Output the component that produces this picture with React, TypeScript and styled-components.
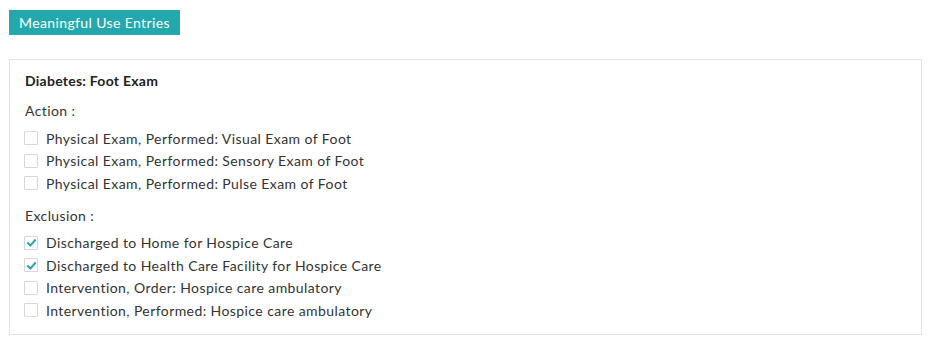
import styled, { createGlobalStyle } from "styled-components";

const GlobalStyle = createGlobalStyle`
  body {
    margin: 0;
    background: #fff;
    font-family: Lato, "Open Sans", sans-serif;
    color: #333;
  }
`

const Page = styled.div`
  padding: 10px 9px 0 9px;
`

const EntriesButton = styled.button`
  display: block;
  height: 25px;
  padding: 0 10px;
  border: none;
  border-radius: 0;
  background: #23a9ad;
  color: #fff;
  font-family: Lato, sans-serif;
  font-size: 14px;
  letter-spacing: 0.38px;
  line-height: 25px;
  cursor: pointer;
`

const Panel = styled.section`
  margin-top: 24px;
  border: 1px solid #e3e3e3;
  padding: 12px 15px 12px 15px;
`

const Title = styled.h3`
  margin: 0;
  font-size: 14px;
  font-weight: 700;
  letter-spacing: 0.25px;
  line-height: 18px;
  color: #222;
`

const GroupLabel = styled.div`
  margin-top: 12px;
  font-size: 14px;
  line-height: 18px;
  letter-spacing: 0.4px;
`

const List = styled.ul`
  list-style: none;
  margin: 7px 0 0 0;
  padding: 0;
`

const Row = styled.li`
  display: flex;
  align-items: center;
  height: 22.5px;
  font-size: 14px;
  letter-spacing: 0.42px;
`

const Box = styled.span`
  box-sizing: border-box;
  width: 14px;
  height: 14px;
  margin-left: -1px;
  margin-right: 8px;
  border: 1px solid #d6d6d6;
  border-radius: 1px;
  display: flex;
  align-items: center;
  justify-content: center;
  background: #fff;
  flex-shrink: 0;
`

interface IEntry {
  label: string,
  checked?: boolean,
}

const actions: IEntry[] = [
  { label: "Physical Exam, Performed: Visual Exam of Foot" },
  { label: "Physical Exam, Performed: Sensory Exam of Foot" },
  { label: "Physical Exam, Performed: Pulse Exam of Foot" },
]

const exclusions: IEntry[] = [
  { label: "Discharged to Home for Hospice Care", checked: true },
  { label: "Discharged to Health Care Facility for Hospice Care", checked: true },
  { label: "Intervention, Order: Hospice care ambulatory" },
  { label: "Intervention, Performed: Hospice care ambulatory" },
]

function Check({ checked }: { checked?: boolean }) {
  return <Box>
    {checked && (
      <svg width="11" height="11" viewBox="0 0 10 10">
        <path d="M1.2 5 L4 7.7 L8.8 2.3" fill="none" stroke="#23a9ad" strokeWidth="1.8" />
      </svg>
    )}
  </Box>
}

function EntryList({ items }: { items: IEntry[] }) {
  return <List>
    {items.map(item =>
      <Row key={item.label}>
        <Check checked={item.checked} />
        {item.label}
      </Row>)}
  </List>
}

export default function App() {
  return <>
    <GlobalStyle />
    <Page>
      <EntriesButton>Meaningful Use Entries</EntriesButton>
      <Panel>
        <Title>Diabetes: Foot Exam</Title>
        <GroupLabel>Action :</GroupLabel>
        <EntryList items={actions} />
        <GroupLabel>Exclusion :</GroupLabel>
        <EntryList items={exclusions} />
      </Panel>
    </Page>
  </>
}
